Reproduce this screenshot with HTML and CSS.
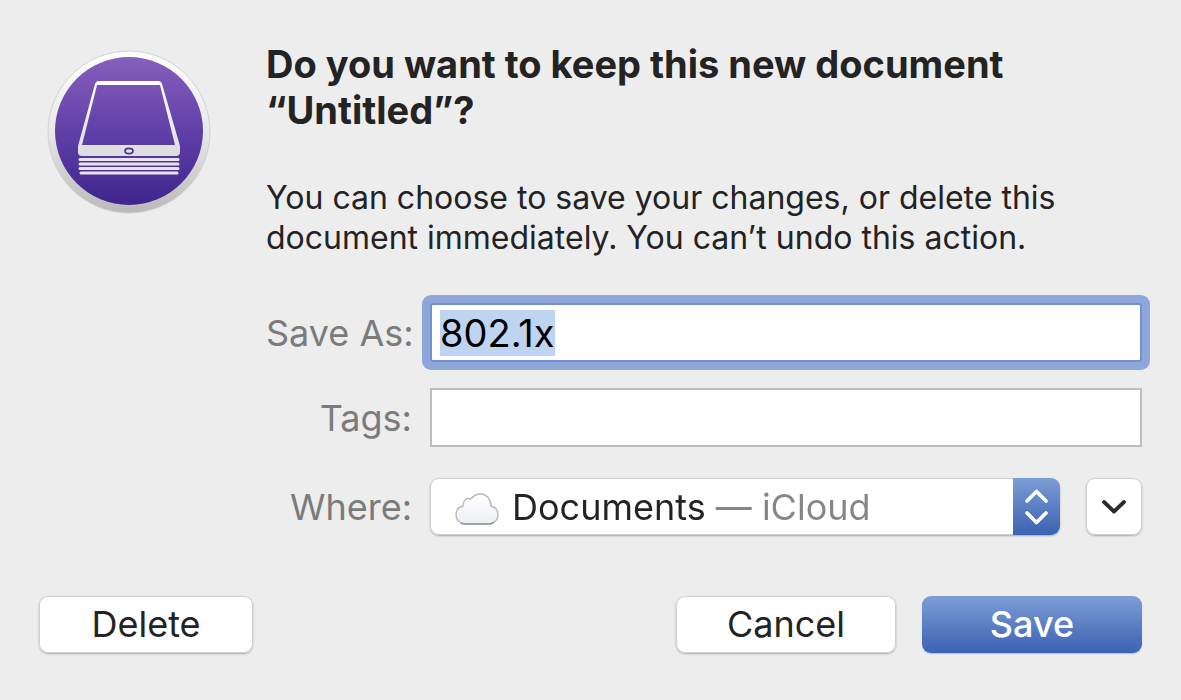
FILE: index.html
```
<!DOCTYPE html>
<html lang="en">
<head>
    <meta charset="UTF-8">
    <meta name="viewport" content="width=device-width, initial-scale=1.0">
    <title>Save Document</title>
    <link rel="stylesheet" href="styles.css">
</head>
<body>

    <form class="dialog">
        <div class="intro">
            <svg class="app-icon" viewBox="0 0 164 164" aria-hidden="true">
                <defs>
                    <linearGradient id="rim" x1="0" y1="0" x2="0" y2="1">
                        <stop offset="0" stop-color="#ffffff"/>
                        <stop offset="0.5" stop-color="#e8e8e8"/>
                        <stop offset="1" stop-color="#b9b9b9"/>
                    </linearGradient>
                    <linearGradient id="disc" x1="0" y1="0" x2="0" y2="1">
                        <stop offset="0" stop-color="#875fbd"/>
                        <stop offset="0.55" stop-color="#5c3da6"/>
                        <stop offset="1" stop-color="#3e258c"/>
                    </linearGradient>
                    <linearGradient id="metal" x1="0" y1="0" x2="0" y2="1">
                        <stop offset="0" stop-color="#ffffff"/>
                        <stop offset="1" stop-color="#dcdcdf"/>
                    </linearGradient>
                </defs>
                <circle cx="82" cy="82" r="81" fill="url(#rim)" stroke="#d2d2d2"/>
                <circle cx="82" cy="81" r="74" fill="url(#disc)"/>
                <path fill="url(#metal)" fill-rule="evenodd" d="M51 31H111Q114 31 115 34L133 96V102Q133 106 129 106H35Q31 106 31 102V96L48 34Q49 31 51 31ZM50 35L35 95H128L113 35Z"/>
                <ellipse cx="82" cy="101" rx="4" ry="2.6" fill="none" stroke="#4b3784" stroke-width="1.7"/>
                <g fill="none" stroke="#e6e3ed" stroke-width="3" stroke-linecap="round">
                    <path d="M33 109.500H131"/>
                    <path d="M33 114H131"/>
                    <path d="M33 118.500H131"/>
                    <path d="M34 123H130"/>
                </g>
            </svg>
            <div class="message">
                <h1>Do you want to keep this new document “Untitled”?</h1>
                <p>You can choose to save your changes, or delete this document immediately. You can’t undo this action.</p>
            </div>
        </div>

        <div class="fields">
            <label for="save-as">Save As:</label>
            <input type="text" id="save-as" class="text-field" value="802.1x" autocomplete="off" spellcheck="false">

            <label for="tags">Tags:</label>
            <input type="text" id="tags" class="text-field" autocomplete="off">

            <label for="where">Where:</label>
            <div class="where-row">
                <div class="popup">
                    <svg class="cloud" viewBox="0 0 44 32" aria-hidden="true">
                        <defs>
                            <linearGradient id="cloud-fill" x1="0" y1="0" x2="0" y2="1">
                                <stop offset="0" stop-color="#ffffff"/>
                                <stop offset="1" stop-color="#eeeff3"/>
                            </linearGradient>
                        </defs>
                        <path d="M10 31H34C39 31 43 27 43 22C43 17 40 14 36 13C36 6 31 1 26 1C21 1 18 3 16 6C11 4 8 8 8 13C4 14 1 17 1 22C1 27 5 31 10 31Z" fill="url(#cloud-fill)" stroke="#b4b7bf" stroke-width="1.4"/>
                        <path d="M6 30Q8 31 10 31H34Q37 31 39 29" fill="none" stroke="#8f959f" stroke-width="1.6"/>
                    </svg>
                    <select id="where">
                        <option>Documents — iCloud</option>
                    </select>
                    <svg class="arrows" viewBox="0 0 47 57" aria-hidden="true">
                        <path d="M14 23L23.500 13.500L33 23M14 35L23.500 44.500L33 35" fill="none" stroke="#fff" stroke-width="3.6" stroke-linecap="round" stroke-linejoin="round"/>
                    </svg>
                </div>
                <button type="button" class="expand" aria-label="Show more options">
                    <svg viewBox="0 0 24 14" aria-hidden="true">
                        <path d="M2 2L12 11.500L22 2" fill="none" stroke="#2b2b2b" stroke-width="3.8" stroke-linecap="round" stroke-linejoin="round"/>
                    </svg>
                </button>
            </div>
        </div>

        <div class="actions">
            <button type="button" class="delete">Delete</button>
            <button type="button" class="cancel">Cancel</button>
            <button type="submit" class="save">Save</button>
        </div>
    </form>

    <script>
        // Start with the suggested name selected so typing replaces it
        const saveAs = document.getElementById('save-as');
        saveAs.focus();
        saveAs.select();
    </script>

</body>
</html>
```
FILE: styles.css
```
* {
    margin: 0;
    padding: 0;
    box-sizing: border-box;
}

body {
    font-family: Inter, "Liberation Sans", sans-serif;
    font-size: 36px;
    color: #232323;
    background-color: #ededed;
}

.dialog {
    padding: 41px 39px;
}

.intro {
    display: flex;
    gap: 55px;
    padding-left: 8px;
}

.app-icon {
    flex: none;
    width: 164px;
    height: 164px;
    margin-top: 9px;
}

h1 {
    font-size: 38px;
    font-weight: 700;
    line-height: 46px;
}

.message p {
    margin-top: 45px;
    font-size: 32px;
    line-height: 40px;
}

.fields {
    display: grid;
    grid-template-columns: 146px 1fr;
    align-items: center;
    column-gap: 18px;
    margin-top: 45px;
    padding-left: 227px;
}

.fields label {
    color: #7b7b7b;
    text-align: right;
    white-space: nowrap;
}

.text-field {
    width: 100%;
    height: 59px;
    margin-bottom: 26px;
    padding: 0 8px;
    border: 2px solid #bdbdbd;
    background-color: #fff;
    font: inherit;
    font-size: 38px;
    color: #000;
    outline: none;
}

.fields label:not([for="where"]) {
    margin-bottom: 26px;
}

.text-field:focus {
    border-color: #7590cf;
    box-shadow: 0 0 0 8px #8ea7da;
    border-radius: 3px;
}

.text-field::selection {
    background-color: #bfd4f0;
    color: #000;
}

.where-row {
    display: flex;
    gap: 26px;
    margin-top: 5px;
}

.fields label[for="where"] {
    margin-top: 5px;
}

.popup {
    display: flex;
    flex: 1;
    align-items: center;
    height: 57px;
    padding-left: 25px;
    border-radius: 9px;
    background-color: #fff;
    box-shadow: inset 0 0 0 1px #cfcfcf, 0 1px 2px #aaa;
}

.cloud {
    flex: none;
    width: 44px;
    height: 32px;
    margin-top: 4px;
}

/* The folder name is dark and its location is gray */
select {
    flex: 1;
    height: 57px;
    margin-right: -47px;
    padding: 0 60px 0 13px;
    border: none;
    appearance: none;
    background: linear-gradient(to right, #232323 212px, #858585 212px);
    background-clip: text;
    -webkit-background-clip: text;
    color: transparent;
    font: inherit;
}

.arrows {
    flex: none;
    width: 47px;
    height: 57px;
    border-radius: 0 9px 9px 0;
    background: linear-gradient(#7d9dd5, #3b62b3);
    pointer-events: none;
    position: relative;
}

button {
    height: 57px;
    padding-bottom: 2px;
    border: none;
    border-radius: 9px;
    background-color: #fff;
    box-shadow: inset 0 0 0 1px #cfcfcf, 0 1px 2px #aaa;
    font: inherit;
    color: #232323;
}

.expand {
    width: 56px;
}

.expand svg {
    display: block;
    width: 24px;
    height: 14px;
    margin: 2px auto 0;
}

.actions {
    display: flex;
    gap: 26px;
    margin-top: 61px;
}

.delete {
    width: 214px;
    margin-right: auto;
}

.cancel,
.save {
    width: 220px;
}

.save {
    background: linear-gradient(#7d9dd5, #3b62b3);
    box-shadow: 0 1px 1px #b5bac5;
    font-weight: 500;
    color: #fff;
}
```
